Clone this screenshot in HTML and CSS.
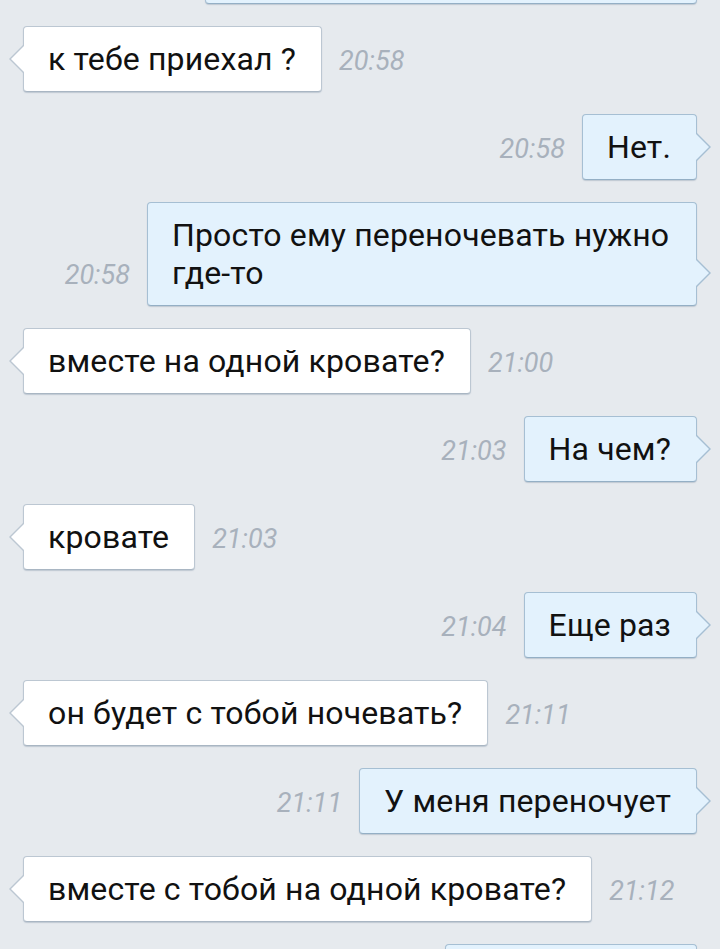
FILE: index.html
```html
<!DOCTYPE html>
<html>

<head>
    <title>Chat</title>
    <link rel="stylesheet" href="styles.css">
</head>

<body>
    <div class="chat">
        <div class="row out first">
            <div class="bubble cut-top"></div>
        </div>

        <div class="row in">
            <div class="bubble">к тебе приехал ?</div>
            <div class="time">20:58</div>
        </div>

        <div class="row out">
            <div class="time">20:58</div>
            <div class="bubble">Нет.</div>
        </div>

        <div class="row out">
            <div class="time">20:58</div>
            <div class="bubble narrow">Просто ему переночевать нужно где-то</div>
        </div>

        <div class="row in">
            <div class="bubble">вместе на одной кровате?</div>
            <div class="time">21:00</div>
        </div>

        <div class="row out">
            <div class="time">21:03</div>
            <div class="bubble">На чем?</div>
        </div>

        <div class="row in">
            <div class="bubble">кровате</div>
            <div class="time">21:03</div>
        </div>

        <div class="row out">
            <div class="time">21:04</div>
            <div class="bubble">Еще раз</div>
        </div>

        <div class="row in">
            <div class="bubble">он будет с тобой ночевать?</div>
            <div class="time">21:11</div>
        </div>

        <div class="row out">
            <div class="time">21:11</div>
            <div class="bubble">У меня переночует</div>
        </div>

        <div class="row in">
            <div class="bubble">вместе с тобой на одной кровате?</div>
            <div class="time">21:12</div>
        </div>

        <div class="row out">
            <div class="bubble cut-bottom"></div>
        </div>
    </div>
</body>

</html>
```

FILE: styles.css
```css
html,
body {
    margin: 0;
    padding: 0;
    background: #e6eaee;
    overflow: hidden;
}

body {
    font-family: Roboto, "Noto Sans", sans-serif;
    height: 949px;
}

.chat {
    display: flex;
    flex-direction: column;
    gap: 22px;
    padding: 0 23px;
}

.row {
    display: flex;
    align-items: last baseline;
    gap: 17px;
}

.row.out {
    justify-content: flex-end;
}

.row.first {
    margin-top: -62px;
}

.bubble {
    position: relative;
    box-sizing: border-box;
    max-width: 575px;
    min-height: 66px;
    padding: 13px 25px 13px 24px;
    font-size: 32px;
    line-height: 38px;
    letter-spacing: 0.15px;
    color: #111;
    background: #fff;
    border: 1px solid #bcc7d2;
    border-bottom-color: #a9b6c3;
    border-radius: 4px;
    box-shadow: 0 1px 1px rgba(120, 140, 160, 0.35);
}

.bubble.narrow {
    max-width: 550px;
}

.out .bubble {
    background: #e3f2fd;
    border-color: #a6bfd3;
    border-bottom-color: #94afc5;
}

/* tails */
.bubble::before,
.bubble::after {
    content: "";
    position: absolute;
    bottom: 18px;
    width: 0;
    height: 0;
    border-top: 14px solid transparent;
    border-bottom: 14px solid transparent;
}

.in .bubble::before {
    left: -15px;
    border-right: 14px solid #bcc7d2;
}

.in .bubble::after {
    left: -13px;
    border-right: 14px solid #fff;
}

.out .bubble::before {
    right: -15px;
    border-left: 14px solid #a6bfd3;
}

.out .bubble::after {
    right: -13px;
    border-left: 14px solid #e3f2fd;
}

.cut-top {
    width: 492px;
}

.cut-top::before,
.cut-top::after,
.cut-bottom::before,
.cut-bottom::after {
    display: none;
}

.cut-bottom {
    width: 252px;
}

.time {
    font-size: 27px;
    font-style: italic;
    color: #a8b1bc;
    line-height: 38px;
}
```
